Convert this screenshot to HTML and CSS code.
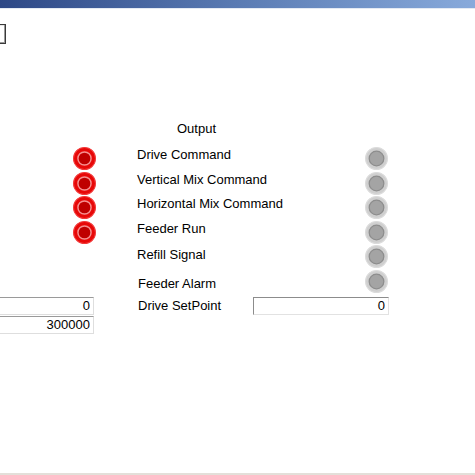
FILE: index.html
```html
<!DOCTYPE html>
<html lang="en">

<head>
    <meta charset="UTF-8">
    <meta name="viewport" content="width=device-width, initial-scale=1.0">
    <title>Output</title>
    <link rel="stylesheet" href="styles.css">
</head>

<body>
    <div class="titlebar"></div>
    <div class="toolbar">
        <span class="tool-btn"></span>
    </div>

    <main class="panel">
        <h3 class="panel-title">Output</h3>

        <div class="signals">
            <div class="signal">
                <svg class="led led-on" viewBox="0 0 22 22"><circle cx="11" cy="11" r="10.5" class="led-rim"/><circle cx="11" cy="11" r="6.3" class="led-core"/></svg>
                <span class="signal-name">Drive Command</span>
                <svg class="led led-off" viewBox="0 0 22 22"><circle cx="11" cy="11" r="10.5" class="led-rim"/><circle cx="11" cy="11" r="7" class="led-core"/></svg>
            </div>
            <div class="signal">
                <svg class="led led-on" viewBox="0 0 22 22"><circle cx="11" cy="11" r="10.5" class="led-rim"/><circle cx="11" cy="11" r="6.3" class="led-core"/></svg>
                <span class="signal-name">Vertical Mix Command</span>
                <svg class="led led-off" viewBox="0 0 22 22"><circle cx="11" cy="11" r="10.5" class="led-rim"/><circle cx="11" cy="11" r="7" class="led-core"/></svg>
            </div>
            <div class="signal">
                <svg class="led led-on" viewBox="0 0 22 22"><circle cx="11" cy="11" r="10.5" class="led-rim"/><circle cx="11" cy="11" r="6.3" class="led-core"/></svg>
                <span class="signal-name">Horizontal Mix Command</span>
                <svg class="led led-off" viewBox="0 0 22 22"><circle cx="11" cy="11" r="10.5" class="led-rim"/><circle cx="11" cy="11" r="7" class="led-core"/></svg>
            </div>
            <div class="signal">
                <svg class="led led-on" viewBox="0 0 22 22"><circle cx="11" cy="11" r="10.5" class="led-rim"/><circle cx="11" cy="11" r="6.3" class="led-core"/></svg>
                <span class="signal-name">Feeder Run</span>
                <svg class="led led-off" viewBox="0 0 22 22"><circle cx="11" cy="11" r="10.5" class="led-rim"/><circle cx="11" cy="11" r="7" class="led-core"/></svg>
            </div>
            <div class="signal">
                <span class="signal-name name-mid">Refill Signal</span>
                <svg class="led led-off" viewBox="0 0 22 22"><circle cx="11" cy="11" r="10.5" class="led-rim"/><circle cx="11" cy="11" r="7" class="led-core"/></svg>
            </div>
            <div class="signal">
                <span class="signal-name name-low">Feeder Alarm</span>
                <svg class="led led-off" viewBox="0 0 22 22"><circle cx="11" cy="11" r="10.5" class="led-rim"/><circle cx="11" cy="11" r="7" class="led-core"/></svg>
            </div>
        </div>

        <div class="values">
            <div class="value-row">
                <input class="field field-left" type="text" value="0" readonly>
                <label class="value-name" for="setpoint">Drive SetPoint</label>
                <input class="field field-right" id="setpoint" type="text" value="0">
            </div>
            <div class="value-row">
                <input class="field field-left" type="text" value="300000" readonly>
            </div>
        </div>
    </main>

    <footer class="statusbar"></footer>
</body>

</html>
```

FILE: styles.css
```css
* {
    box-sizing: border-box;
}

body {
    font-family: "Liberation Sans", Arial, sans-serif;
    font-size: 13px;
    color: #000;
    background-color: #fff;
    margin: 0;
    min-height: 100vh;
    display: flex;
    flex-direction: column;
    overflow: hidden;
}

/* window title strip */
.titlebar {
    height: 9px;
    background: linear-gradient(to right, #2d4886, #5a7bb3 50%, #88aadb);
    border-bottom: 1px solid #e4eaf3;
}

.toolbar {
    margin-top: 15px;
    height: 20px;
}

.tool-btn {
    display: block;
    width: 6px;
    height: 20px;
    border: 1px solid #3a3a3a;
    border-left: none;
    box-shadow: inset -1px -1px 0 #9a9a9a, inset 0 1px 0 #e8e8e8;
}

.panel {
    margin-top: 77px;
}

.panel-title {
    margin: 0 0 0 177px;
    font-size: 13px;
    font-weight: normal;
    line-height: 15px;
}

/* signal lamps */
.signals {
    margin-top: 11px;
}

.signal {
    display: grid;
    grid-template-columns: 73px 23px 41px 228px 23px;
    height: 24.6px;
}

.signal-name {
    grid-column: 4;
    line-height: 15px;
    white-space: nowrap;
}

.signal-name.name-mid {
    margin-top: 2px;
}

.signal-name.name-low {
    margin-top: 6px;
    padding-left: 1px;
}

.led {
    width: 23px;
    height: 23px;
}

.led-on {
    grid-column: 2;
}

.led-off {
    grid-column: 5;
}

.led-on .led-rim {
    fill: #e70808;
    stroke: #f23a3a;
    stroke-width: 1;
}

.led-on .led-core {
    fill: #bf0000;
    stroke: #f59090;
    stroke-width: 1.4;
}

.led-off .led-rim {
    fill: #cfcfcf;
    stroke: #dcdcdc;
    stroke-width: 1;
}

.led-off .led-core {
    fill: #a4a4a4;
    stroke: #8d8d8d;
    stroke-width: 1.2;
}

/* numeric fields */
.values {
    margin-top: 2px;
    display: flex;
    flex-direction: column;
    gap: 1px;
}

.value-row {
    display: grid;
    grid-template-columns: 94px 44px 115px 136px;
    align-items: center;
    height: 18px;
}

.field {
    appearance: none;
    height: 18px;
    margin: 0;
    padding: 0 3px 0 0;
    font-family: inherit;
    font-size: 13px;
    color: #000;
    text-align: right;
    background-color: #fff;
    border: 1px solid;
    border-color: #8c8c8c #e2e2e2 #e2e2e2 #8c8c8c;
    border-radius: 0;
    outline: none;
}

.field-left {
    grid-column: 1;
    width: calc(100% + 7px);
    margin-left: -7px;
    border-color: #9a9a9a #dedede #dedede #9a9a9a;
}

.value-name {
    grid-column: 3;
    white-space: nowrap;
}

.field-right {
    grid-column: 4;
    width: 136px;
}

.statusbar {
    margin-top: auto;
    height: 2px;
    background-color: #e3dfd9;
}
```
